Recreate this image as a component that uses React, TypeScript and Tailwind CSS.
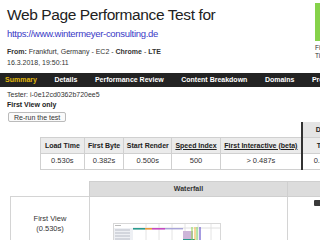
import React from "react";

const font = "font-['Liberation_Sans',Arial,sans-serif]";

const navItems = ["Summary", "Details", "Performance Review", "Content Breakdown", "Domains", "Processing"];

function Waterfall() {
  const grid = [146, 159, 172, 185, 198, 211].map((x) => x - 113);
  return (
    <svg width="110" height="22" viewBox="0 0 110 22">
      <rect x="0.5" y="0.5" width="107" height="21" fill="#fff" stroke="#d8d8d8" />
      <rect x="1" y="5" width="19" height="16" fill="#eef0f4" />
      {[7, 10, 13, 16, 19].map((y) => (
        <line key={y} x1="2" y1={y} x2="17" y2={y} stroke="#b8bcc6" strokeWidth="1" />
      ))}
      <line x1="2" y1="2.5" x2="8" y2="2.5" stroke="#bbb" />
      {grid.map((x) => (
        <line key={x} x1={x} y1="1" x2={x} y2="21" stroke="#e4e4e4" />
      ))}
      <line x1="20" y1="5" x2="107" y2="5" stroke="#e0e0e0" />
      <rect x="20" y="5" width="12" height="1.6" fill="#2a9a8e" />
      <rect x="32" y="5" width="7" height="1.6" fill="#e79a3c" />
      <rect x="39" y="5" width="13" height="1.6" fill="#c64ac0" />
      <rect x="52" y="5" width="18" height="1.4" fill="#a9a4d8" />
      <rect x="70" y="8" width="10" height="8" fill="#cdb6d9" />
      <rect x="70" y="16" width="12" height="3" fill="#2a9a8e" />
      <line x1="79" y1="4" x2="79" y2="21" stroke="#8bd24a" strokeWidth="1" />
      <line x1="82" y1="4" x2="82" y2="21" stroke="#f0b040" strokeWidth="1" />
      <line x1="84" y1="4" x2="84" y2="21" stroke="#6fcf5a" strokeWidth="1" />
      <line x1="87" y1="4" x2="87" y2="21" stroke="#6a5acd" strokeWidth="1.2" />
      <rect x="88" y="18" width="17" height="1.4" fill="#c64ac0" />
    </svg>
  );
}

export default function App() {
  return (
    <div className={`w-[320px] h-[240px] overflow-hidden bg-white text-[#222] ${font}`}>
      {/* Header */}
      <div className="flex">
        <div className="flex-1 pl-[7px] pt-[4px]">
          <h1 className="text-[15.5px] leading-[22px] tracking-[-0.4px] text-[#222]">Web Page Performance Test for</h1>
          <div className="mt-[1px] text-[9.5px] leading-[14px] tracking-[-0.3px] text-[#3a3ac6]">
            https://www.wintermeyer-consulting.de
          </div>
          <div className="mt-[5px] text-[7px] leading-[11px] text-[#333]">
            <b>From:</b> Frankfurt, Germany - EC2 - <b>Chrome</b> - <b>LTE</b>
          </div>
          <div className="text-[7px] leading-[11px] text-[#333]">16.3.2018, 19:50:11</div>
        </div>
        <div className="w-[5px] shrink-0 pt-[3px] whitespace-nowrap">
          <div className="h-[38px] w-[20px] bg-[#86d24a]" />
          <div className="mt-[3px] text-[6.5px] leading-[8px] text-[#333]">First</div>
          <div className="text-[6.5px] leading-[8px] text-[#333]">Time</div>
        </div>
      </div>

      {/* Nav bar */}
      <div className="mt-[5px] flex h-[14px] items-center gap-[17.5px] whitespace-nowrap bg-[#232323] pl-[5px] text-[7px] font-bold text-white">
        {navItems.map((item, i) => (
          <span key={item} className={i === 0 ? "text-[#e1b80c]" : ""}>
            {item}
          </span>
        ))}
      </div>

      {/* Tester info */}
      <div className="pl-[7px] pt-[3px]">
        <div className="text-[7px] leading-[10px] text-[#333]">Tester: i-0e12cd0362b720ee5</div>
        <div className="text-[7px] font-bold leading-[10px]">First View only</div>
        <button className="mt-[2px] ml-[1px] flex h-[10px] items-center rounded-[2px] border border-[#bbb] bg-[#fafafa] px-[5px] text-[7px] leading-none text-[#333]">
          Re-run the test
        </button>
      </div>

      {/* Summary table */}
      <table className="ml-[40px] w-[420px] table-fixed border-collapse text-[7px] leading-none">
        <colgroup>
          <col className="w-[43px]" />
          <col className="w-[39px]" />
          <col className="w-[47px]" />
          <col className="w-[48px]" />
          <col className="w-[80px]" />
          <col className="w-[45px]" />
          <col className="w-[55px]" />
          <col className="w-[55px]" />
        </colgroup>
        <tbody>
          <tr className="h-[15px]">
            <td colSpan={5} />
            <td colSpan={3} className="border-l-2 border-l-[#333] bg-[#e4e4e4] pl-[13px] text-left font-bold">
              Document Complete
            </td>
          </tr>
          <tr className="h-[16px] bg-[#ebebeb] font-bold">
            <td className="border border-[#d0d0d0] text-center whitespace-nowrap">Load Time</td>
            <td className="border border-[#d0d0d0] text-center whitespace-nowrap">First Byte</td>
            <td className="border border-[#d0d0d0] text-center whitespace-nowrap">Start Render</td>
            <td className="border border-[#d0d0d0] text-center underline whitespace-nowrap">Speed Index</td>
            <td className="border border-[#d0d0d0] text-center underline whitespace-nowrap">First Interactive (beta)</td>
            <td className="border border-[#d0d0d0] border-l-2 border-l-[#333] text-center">Time</td>
            <td className="border border-[#d0d0d0] text-center">Requests</td>
            <td className="border border-[#d0d0d0] text-center">Bytes In</td>
          </tr>
          <tr className="h-[16px] text-[7.5px] text-[#333]">
            <td className="border border-[#d0d0d0] text-center">0.530s</td>
            <td className="border border-[#d0d0d0] text-center">0.382s</td>
            <td className="border border-[#d0d0d0] text-center">0.500s</td>
            <td className="border border-[#d0d0d0] text-center">500</td>
            <td className="border border-[#d0d0d0] text-center">&gt; 0.487s</td>
            <td className="border border-[#d0d0d0] border-l-2 border-l-[#333] text-center">0.530s</td>
            <td className="border border-[#d0d0d0] text-center">2</td>
            <td className="border border-[#d0d0d0] text-center">4 KB</td>
          </tr>
        </tbody>
      </table>

      {/* Waterfall table */}
      <table className="mt-[11px] ml-[10px] w-[400px] table-fixed border-collapse text-[7px] leading-none">
        <colgroup>
          <col className="w-[79px]" />
          <col className="w-[198px]" />
          <col className="w-[123px]" />
        </colgroup>
        <tbody>
          <tr className="h-[15px]">
            <td />
            <td className="border border-[#cfcfcf] bg-[#dcdcdc] text-center font-bold text-[#333]">Waterfall</td>
            <td className="border border-[#cfcfcf] bg-[#dcdcdc]" />
          </tr>
          <tr className="h-[60px]">
            <td className="border border-[#d4d4d4] pb-[4px] text-center align-middle text-[7.5px] leading-[10px] text-[#333]">
              First View
              <br />
              (0.530s)
            </td>
            <td className="border border-[#d4d4d4] pl-[23px] pt-[26px] align-top">
              <Waterfall />
            </td>
            <td className="border border-[#d4d4d4] pl-[26px] pt-[3px] align-top">
              <div className="h-[6px] w-[14px] rounded-[1px] bg-[#3a3a3a]" />
            </td>
          </tr>
        </tbody>
      </table>
    </div>
  );
}
